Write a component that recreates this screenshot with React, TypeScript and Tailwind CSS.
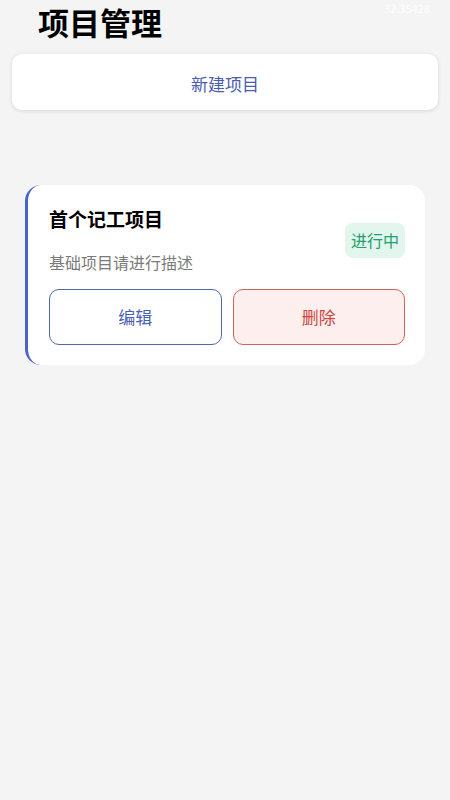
import React from 'react';

const font = { fontFamily: '"Noto Sans CJK SC", "Noto Sans", sans-serif' };

export default function App() {
  return (
    <div className="relative min-h-[800px] w-full bg-[#f4f4f4]" style={font}>
      {/* faint status text in the corner */}
      <div className="absolute right-[20px] top-0 text-[11px] leading-[16px] text-white/80">32.35428</div>

      <div className="flex flex-col px-[12px]">
        <h1 className="pl-[26px] text-[31px] font-bold leading-[44px] text-black">项目管理</h1>

        <button className="mt-[10px] flex h-[56px] items-center justify-center rounded-[10px] bg-white pt-[3px] text-[17px] text-[#4a5bb2] shadow-[0_1px_4px_rgba(0,0,0,0.12)]">
          新建项目
        </button>

        <div className="mx-[13px] mt-[75px] flex flex-col rounded-[16px] border-l-[3px] border-[#4766c8] bg-white pb-[20px] pl-[21px] pr-[20px] pt-[20px]">
          <div className="flex items-center justify-between">
            <div className="flex flex-col">
              <h2 className="text-[19px] font-bold leading-[28px] text-black">首个记工项目</h2>
              <p className="mt-[17px] text-[16px] leading-[24px] text-[#7a7a7a]">基础项目请进行描述</p>
            </div>
            <span className="mt-[2px] rounded-[8px] bg-[#e2f6ee] px-[6px] py-[5px] text-[16px] leading-[25px] text-[#22a06d]">进行中</span>
          </div>

          <div className="mt-[15px] grid grid-cols-2 gap-[11px]">
            <button className="flex h-[56px] items-center justify-center rounded-[10px] border border-[#4f66b6] bg-white text-[17px] text-[#4a5fb3]">
              编辑
            </button>
            <button className="flex h-[56px] items-center justify-center rounded-[10px] border border-[#d6605a] bg-[#fcefee] text-[17px] text-[#cf4840]">
              删除
            </button>
          </div>
        </div>
      </div>
    </div>
  );
}
